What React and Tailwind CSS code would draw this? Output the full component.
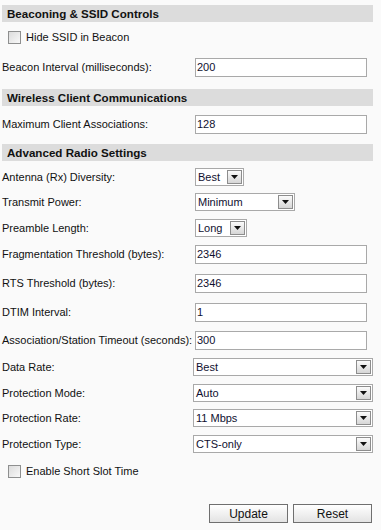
import React from "react";

const Arrow = () => (
  <span className="flex h-[14px] w-[15px] shrink-0 items-center justify-center border border-[#8d8d8d] bg-gradient-to-b from-[#fbfbfb] to-[#d6d6d6]">
    <svg width="7" height="4" viewBox="0 0 7 4">
      <path d="M0 0h7L3.5 4z" fill="#111" />
    </svg>
  </span>
);

function SectionHeader({ title, mt }) {
  return (
    <div
      className={`${mt} flex h-[17px] w-[371px] items-center bg-[#dcdcdc] pl-[5px] text-[11.6px] font-bold text-[#111]`}
    >
      {title}
    </div>
  );
}

function TextField({ value }) {
  return (
    <div className="flex h-[19px] w-[172px] items-center border border-[#a9a9a9] bg-white pl-[1px] text-[#101030]">
      {value}
    </div>
  );
}

function Select({ value, width }) {
  return (
    <div
      className={`${width} flex h-[18px] items-center justify-between border border-[#a9a9a9] bg-white pl-[2px] pr-[1px] text-[#101030]`}
    >
      <span>{value}</span>
      <Arrow />
    </div>
  );
}

function Row({ label, mt, children, wide }) {
  return (
    <div className={`${mt} flex items-center`}>
      <div className={wide ? "w-[191px]" : "w-[193px]"}>{label}</div>
      {children}
    </div>
  );
}

function Check({ label, mt }) {
  return (
    <div className={`${mt} flex h-[13px] items-center pl-[6px]`}>
      <span className="h-[13px] w-[13px] border border-[#8e8f8f] bg-gradient-to-br from-[#dcdcdc] to-[#f8f8f8]" />
      <span className="ml-[5px]">{label}</span>
    </div>
  );
}

function Btn({ children }) {
  return (
    <button className="h-[19px] w-[79px] border border-[#6f6f6f] bg-gradient-to-b from-white to-[#e3e3e3] text-[12px] text-[#111]">
      {children}
    </button>
  );
}

export default function App() {
  const dataRows = [
    { label: "Data Rate:", value: "Best", mt: "mt-[8px]" },
    { label: "Protection Mode:", value: "Auto", mt: "mt-[8px]" },
    { label: "Protection Rate:", value: "11 Mbps", mt: "mt-[7px]" },
    { label: "Protection Type:", value: "CTS-only", mt: "mt-[8px]" },
  ];

  return (
    <div className="h-[530px] w-[381px] bg-[#fafafa] pl-[2px] font-['Liberation_Sans',Arial,sans-serif] text-[11px] text-[#111]">
      <div className="h-[5px]" />
      <SectionHeader title="Beaconing & SSID Controls" mt="" />
      <Check label="Hide SSID in Beacon" mt="mt-[9px]" />
      <Row label="Beacon Interval (milliseconds):" mt="mt-[14px]">
        <TextField value="200" />
      </Row>

      <SectionHeader title="Wireless Client Communications" mt="mt-[12px]" />
      <Row label="Maximum Client Associations:" mt="mt-[9px]">
        <TextField value="128" />
      </Row>

      <SectionHeader title="Advanced Radio Settings" mt="mt-[10px]" />
      <Row label="Antenna (Rx) Diversity:" mt="mt-[7px]">
        <Select value="Best" width="w-[49px]" />
      </Row>
      <Row label="Transmit Power:" mt="mt-[7px]">
        <Select value="Minimum" width="w-[100px]" />
      </Row>
      <Row label="Preamble Length:" mt="mt-[8px]">
        <Select value="Long" width="w-[52px]" />
      </Row>
      <Row label="Fragmentation Threshold (bytes):" mt="mt-[8px]">
        <TextField value="2346" />
      </Row>
      <Row label="RTS Threshold (bytes):" mt="mt-[10px]">
        <TextField value="2346" />
      </Row>
      <Row label="DTIM Interval:" mt="mt-[10px]">
        <TextField value="1" />
      </Row>
      <Row label="Association/Station Timeout (seconds):" mt="mt-[9px]">
        <TextField value="300" />
      </Row>
      {dataRows.map((r) => (
        <Row key={r.label} label={r.label} mt={r.mt} wide>
          <Select value={r.value} width="w-[180px]" />
        </Row>
      ))}

      <Check label="Enable Short Slot Time" mt="mt-[12px]" />

      <div className="mt-[26px] flex w-[371px] justify-end gap-[5px] pr-[1px]">
        <Btn>Update</Btn>
        <Btn>Reset</Btn>
      </div>
    </div>
  );
}
